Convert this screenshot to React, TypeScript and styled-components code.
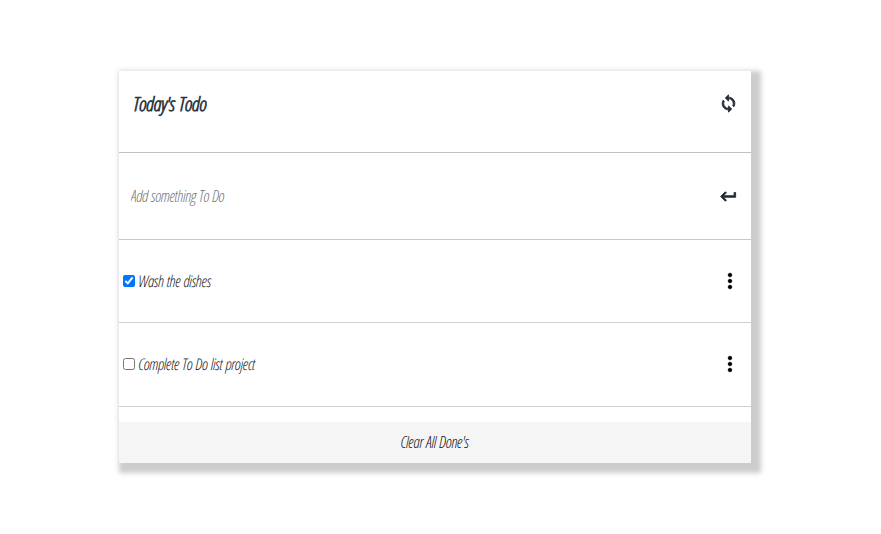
import React, { useState } from 'react';
import styled, { createGlobalStyle } from 'styled-components';

const GlobalStyle = createGlobalStyle`
  * { box-sizing: border-box; }
  body {
    margin: 0;
    background: #fff;
    font-family: "Open Sans", sans-serif;
    font-stretch: 75%;
    font-style: italic;
    font-weight: 300;
    text-rendering: geometricPrecision;
  }
`;

const Page = styled.main`
  height: 534px;
  padding: 71px 0 0 118.5px;
`;

const Card = styled.section`
  display: flex;
  flex-direction: column;
  width: 632.5px;
  height: 392px;
  background: #fff;
  box-shadow: 5px 5px 5px 5px #ccc;
`;

const Row = styled.div<{ $height: number; $left: number; $right: number; $line?: string }>`
  display: flex;
  align-items: center;
  justify-content: space-between;
  height: ${(p) => p.$height}px;
  padding: 0 ${(p) => p.$right}px 0 ${(p) => p.$left}px;
  border-bottom: 1px solid ${(p) => p.$line ?? '#d0d0d0'};
`;

const Header = styled(Row)`
  padding-bottom: 16px;
`;

const Title = styled.h1`
  margin: 0;
  font-size: 19.6px;
  font-weight: 300;
  letter-spacing: -0.36px;
  word-spacing: 1.4px;
  -webkit-text-stroke: 0.75px #2c3641;
  color: #2c3641;
`;

const TodoInput = styled.input`
  width: 400px;
  padding: 0;
  border: 0;
  outline: 0;
  background: transparent;
  font: inherit;
  font-size: 16px;
  letter-spacing: -0.45px;
  word-spacing: 0.8px;
  color: #333;
  &::placeholder { color: #757575; opacity: 1; }
`;

const Label = styled.label`
  display: flex;
  align-items: center;
  gap: 3px;
  font-size: 16px;
  letter-spacing: -0.41px;
  word-spacing: 0.8px;
  color: #222;
`;

const Check = styled.input`
  width: 12px;
  height: 12px;
  margin: 0;
`;

const IconButton = styled.button<{ $color: string; $bold?: boolean }>`
  display: flex;
  padding: 0;
  border: 0;
  background: none;
  color: ${(p) => p.$color};
  svg {
    fill: currentColor;
    stroke: currentColor;
    stroke-width: ${(p) => (p.$bold ? 1.1 : 0.3)};
    overflow: visible;
  }
`;

const ClearButton = styled.button`
  height: 41px;
  margin-top: auto;
  padding: 0 0 2px;
  border: 0;
  background: #f5f5f5;
  font: inherit;
  font-size: 16px;
  letter-spacing: -0.36px;
  word-spacing: 0.8px;
  color: #111;
`;

const icons = {
  sync: 'M12 4V1L8 5l4 4V6c3.31 0 6 2.69 6 6 0 1.01-.25 1.97-.7 2.8l1.46 1.46C19.54 15.03 20 13.57 20 12c0-4.42-3.58-8-8-8zm0 14c-3.31 0-6-2.69-6-6 0-1.01.25-1.97.7-2.8L5.24 7.74C4.46 8.97 4 10.43 4 12c0 4.42 3.58 8 8 8v3l4-4-4-4v3z',
  enter: 'M19 7v4H5.83l3.58-3.59L8 6l-6 6 6 6 1.41-1.41L5.83 13H21V7z',
  more: 'M12 8c1.1 0 2-.9 2-2s-.9-2-2-2-2 .9-2 2 .9 2 2 2zm0 2c-1.1 0-2 .9-2 2s.9 2 2 2 2-.9 2-2-.9-2-2-2zm0 6c-1.1 0-2 .9-2 2s.9 2 2 2 2-.9 2-2-.9-2-2-2z',
};

function Icon({ name, size }: { name: keyof typeof icons; size: number }) {
  return (
    <svg width={size} height={size} viewBox="0 0 24 24" aria-hidden="true">
      <path d={icons[name]} />
    </svg>
  );
}

export default function App() {
  const [items, setItems] = useState([
    { text: 'Wash the dishes', done: true },
    { text: 'Complete To Do list project', done: false },
  ]);
  const toggle = (index: number) =>
    setItems(items.map((item, i) => (i === index ? { ...item, done: !item.done } : item)));

  return (
    <>
      <GlobalStyle />
      <Page>
        <Card>
          <Header $height={82} $left={15} $right={13.5} $line="#c0c0c0">
            <Title>Today's Todo</Title>
            <IconButton $color="#212b35" $bold aria-label="Refresh"><Icon name="sync" size={19} /></IconButton>
          </Header>
          <Row $height={87} $left={12.5} $right={13.5} $line="#c8c8c8">
            <TodoInput placeholder="Add something To Do" />
            <IconButton $color="#212b35" $bold aria-label="Add"><Icon name="enter" size={19} /></IconButton>
          </Row>
          {items.map((item, i) => (
            <Row key={item.text} $height={83.3} $left={4.9} $right={9}>
              <Label>
                <Check type="checkbox" checked={item.done} onChange={() => toggle(i)} />
                {item.text}
              </Label>
              <IconButton $color="#000" aria-label="Options"><Icon name="more" size={24} /></IconButton>
            </Row>
          ))}
          <ClearButton onClick={() => setItems(items.filter((item) => !item.done))}>Clear All Done's</ClearButton>
        </Card>
      </Page>
    </>
  );
}
